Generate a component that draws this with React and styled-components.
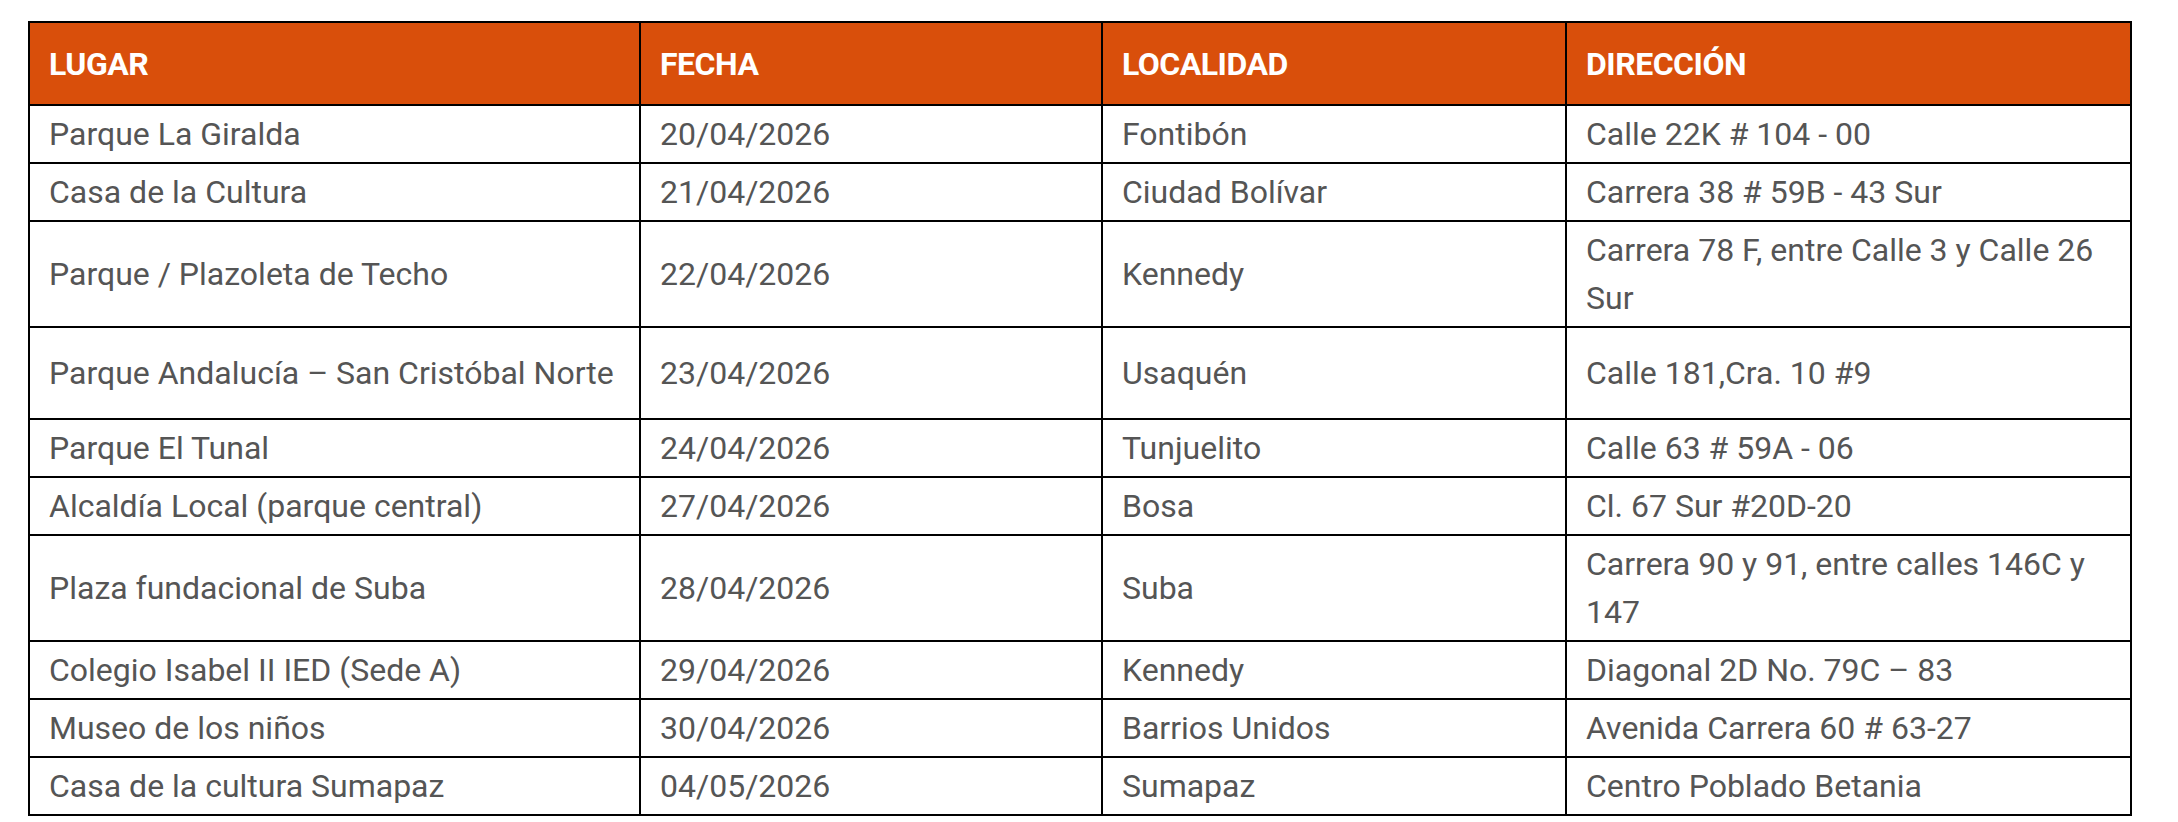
import React from 'react'
import styled, { createGlobalStyle } from 'styled-components'

const GlobalStyle = createGlobalStyle`
	body {
		margin: 0;
		background: #fff;
		font-family: Roboto, 'Liberation Sans', sans-serif;
	}
`

const Page = styled.div`
	padding: 21px 0 0 28px;
`

const Table = styled.table`
	width: 2104px;
	table-layout: fixed;
	border-collapse: collapse;
	border: 2px solid #000;
`

const HeadCell = styled.th`
	height: 81px;
	padding: 0 19px;
	background: #d94f0b;
	border: 2px solid #000;
	color: #fff;
	font-size: 32px;
	font-weight: 700;
	letter-spacing: -0.5px;
	text-align: left;
	vertical-align: middle;
`

const Cell = styled.td`
	height: ${props => (props.tall ? '82px' : 'auto')};
	padding: 4px 19px;
	border: 2px solid #000;
	color: #555;
	font-size: 32px;
	line-height: 48px;
	vertical-align: middle;
`

const columns = [
	{ title: 'LUGAR', width: 611 },
	{ title: 'FECHA', width: 462 },
	{ title: 'LOCALIDAD', width: 464 },
	{ title: 'DIRECCIÓN', width: 565 },
]

const rows = [
	['Parque La Giralda', '20/04/2026', 'Fontibón', 'Calle 22K # 104 - 00'],
	['Casa de la Cultura', '21/04/2026', 'Ciudad Bolívar', 'Carrera 38 # 59B - 43 Sur'],
	['Parque / Plazoleta de Techo', '22/04/2026', 'Kennedy', 'Carrera 78 F, entre Calle 3 y Calle 26 Sur'],
	['Parque Andalucía – San Cristóbal Norte', '23/04/2026', 'Usaquén', 'Calle 181,Cra. 10 #9', true],
	['Parque El Tunal', '24/04/2026', 'Tunjuelito', 'Calle 63 # 59A - 06'],
	['Alcaldía Local (parque central)', '27/04/2026', 'Bosa', 'Cl. 67 Sur #20D-20'],
	['Plaza fundacional de Suba', '28/04/2026', 'Suba', 'Carrera 90 y 91, entre calles 146C y 147'],
	['Colegio Isabel II IED (Sede A)', '29/04/2026', 'Kennedy', 'Diagonal 2D No. 79C – 83'],
	['Museo de los niños', '30/04/2026', 'Barrios Unidos', 'Avenida Carrera 60 # 63-27'],
	['Casa de la cultura Sumapaz', '04/05/2026', 'Sumapaz', 'Centro Poblado Betania'],
]

const App = () => {
	return (
		<Page>
			<GlobalStyle />
			<Table>
				<colgroup>
					{columns.map(col => (
						<col key={col.title} style={{ width: col.width }} />
					))}
				</colgroup>
				<thead>
					<tr>
						{columns.map(col => (
							<HeadCell key={col.title}>{col.title}</HeadCell>
						))}
					</tr>
				</thead>
				<tbody>
					{rows.map(([lugar, fecha, localidad, direccion, tall]) => (
						<tr key={lugar}>
							<Cell tall={tall}>{lugar}</Cell>
							<Cell tall={tall}>{fecha}</Cell>
							<Cell tall={tall}>{localidad}</Cell>
							<Cell tall={tall}>{direccion}</Cell>
						</tr>
					))}
				</tbody>
			</Table>
		</Page>
	)
}

export default App
